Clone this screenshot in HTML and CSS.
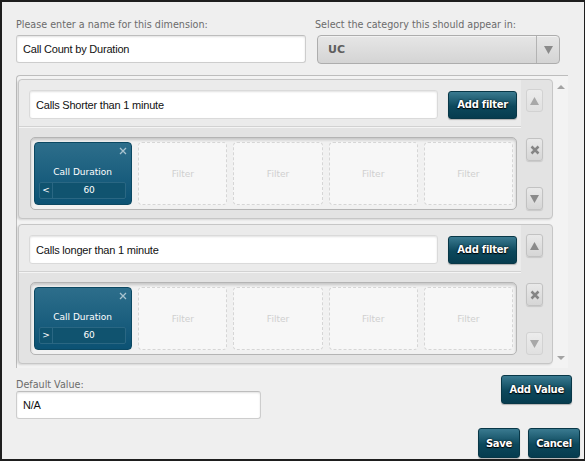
FILE: index.html
```html
<!DOCTYPE html>
<html lang="en">
<head>
  <meta charset="UTF-8" />
  <title>Edit dimension</title>
  <link rel="stylesheet" href="styles.css">
</head>
<body>
  <div class="dialog">
    <div class="top-row">
      <div class="field name-field">
        <label class="label">Please enter a name for this dimension:</label>
        <input class="text-input" type="text" value="Call Count by Duration">
      </div>
      <div class="field cat-field">
        <label class="label">Select the category this should appear in:</label>
        <div class="select">
          <span class="select-value">UC</span>
          <span class="select-arrow">
            <svg width="9" height="8" viewBox="0 0 9 8"><polygon points="0,0 9,0 4.5,8" fill="#8a8a8a"/></svg>
          </span>
        </div>
      </div>
    </div>

    <div class="rules">
      <div class="rule-list">
        <!-- rule 1 -->
        <div class="rule">
          <div class="rule-main">
            <div class="rule-head">
              <input class="text-input rule-name" type="text" value="Calls Shorter than 1 minute">
              <button class="btn">Add filter</button>
            </div>
            <div class="rule-body">
              <div class="filters">
                <div class="card">
                  <span class="card-close">
                    <svg width="8" height="8" viewBox="0 0 8 8"><path d="M1 1L7 7M7 1L1 7" stroke="#a9c3cf" stroke-width="1.3"/></svg>
                  </span>
                  <div class="card-title">Call Duration</div>
                  <div class="card-value"><span class="card-op">&lt;</span><span class="card-num">60</span></div>
                </div>
                <div class="slot">Filter</div>
                <div class="slot">Filter</div>
                <div class="slot">Filter</div>
                <div class="slot">Filter</div>
              </div>
            </div>
          </div>
          <div class="rule-side">
            <div class="icon-btn is-off">
              <svg width="9" height="8" viewBox="0 0 9 8"><polygon points="4.5,0 9,8 0,8" fill="#a8a8a8"/></svg>
            </div>
            <div class="icon-btn">
              <svg width="10" height="10" viewBox="0 0 10 10"><path d="M1.5 1.5L8.5 8.5M8.5 1.5L1.5 8.5" stroke="#858585" stroke-width="2.5"/></svg>
            </div>
            <div class="icon-btn">
              <svg width="9" height="8" viewBox="0 0 9 8"><polygon points="0,0 9,0 4.5,8" fill="#8a8a8a"/></svg>
            </div>
          </div>
        </div>

        <!-- rule 2 -->
        <div class="rule">
          <div class="rule-main">
            <div class="rule-head">
              <input class="text-input rule-name" type="text" value="Calls longer than 1 minute">
              <button class="btn">Add filter</button>
            </div>
            <div class="rule-body">
              <div class="filters">
                <div class="card">
                  <span class="card-close">
                    <svg width="8" height="8" viewBox="0 0 8 8"><path d="M1 1L7 7M7 1L1 7" stroke="#a9c3cf" stroke-width="1.3"/></svg>
                  </span>
                  <div class="card-title">Call Duration</div>
                  <div class="card-value"><span class="card-op">&gt;</span><span class="card-num">60</span></div>
                </div>
                <div class="slot">Filter</div>
                <div class="slot">Filter</div>
                <div class="slot">Filter</div>
                <div class="slot">Filter</div>
              </div>
            </div>
          </div>
          <div class="rule-side">
            <div class="icon-btn">
              <svg width="9" height="8" viewBox="0 0 9 8"><polygon points="4.5,0 9,8 0,8" fill="#8a8a8a"/></svg>
            </div>
            <div class="icon-btn">
              <svg width="10" height="10" viewBox="0 0 10 10"><path d="M1.5 1.5L8.5 8.5M8.5 1.5L1.5 8.5" stroke="#858585" stroke-width="2.5"/></svg>
            </div>
            <div class="icon-btn is-off">
              <svg width="9" height="8" viewBox="0 0 9 8"><polygon points="0,0 9,0 4.5,8" fill="#a8a8a8"/></svg>
            </div>
          </div>
        </div>
      </div>

      <div class="scrollbar">
        <span class="scroll-up"></span>
        <span class="scroll-down"></span>
      </div>
    </div>

    <div class="bottom-row">
      <div class="field default-field">
        <label class="label">Default Value:</label>
        <input class="text-input" type="text" value="N/A">
      </div>
      <button class="btn btn-value">Add Value</button>
    </div>

    <div class="footer">
      <button class="btn btn-save">Save</button>
      <button class="btn btn-cancel">Cancel</button>
    </div>
  </div>
</body>
</html>
```

FILE: styles.css
```css
* {
  box-sizing: border-box;
  margin: 0;
  padding: 0;
}

body {
  width: 585px;
  height: 461px;
  overflow: hidden;
  background-color: #efefef;
  font-family: "DejaVu Sans", Verdana, sans-serif;
}

.dialog {
  width: 585px;
  height: 461px;
  border: solid #1e1e1e;
  border-width: 2px 1px 2px 2px;
  padding: 16px 4px 0 14px;
  display: flex;
  flex-direction: column;
}

/* Fields */

.top-row {
  display: flex;
}

.field {
  display: flex;
  flex-direction: column;
}

.name-field {
  width: 290px;
}

.cat-field {
  width: 245px;
  margin-left: 9px;
}

.label {
  font-size: 9.6px;
  line-height: 13px;
  height: 13px;
  margin-bottom: 4px;
  color: #6b6b6b;
  white-space: nowrap;
}

.text-input {
  height: 28px;
  width: 100%;
  border: 1px solid #cdcdcd;
  border-top-color: #bdbdbd;
  border-radius: 3px;
  background: #fff;
  box-shadow: inset 0 1px 2px rgba(0, 0, 0, 0.12);
  padding: 0 6px;
  font-family: "Liberation Sans", Arial, sans-serif;
  font-size: 11px;
  letter-spacing: -0.2px;
  color: #111;
  outline: none;
}

.select {
  height: 29px;
  margin-left: 2px;
  display: flex;
  align-items: center;
  border: 1px solid #adadad;
  border-radius: 4px;
  background: linear-gradient(#e6e6e6, #d4d4d4);
  box-shadow: inset 0 1px 0 #f2f2f2;
}

.select-value {
  flex: 1;
  padding-left: 10px;
  font-size: 11px;
  font-weight: bold;
  color: #5e5e5e;
}

.select-arrow {
  width: 23px;
  height: 100%;
  border-left: 1px solid #b3b3b3;
  display: flex;
  align-items: center;
  justify-content: center;
}

/* Rules box */

.rules {
  display: flex;
  height: 293px;
  margin-top: 11px;
  margin-right: 12px;
  border: 1px solid #bdbdbd;
  border-right: none;
  border-bottom: none;
  border-radius: 4px 0 0 0;
  background-color: #f3f3f3;
}

.rule-list {
  flex: 1;
  padding: 3px 0 0 1px;
  display: flex;
  flex-direction: column;
  gap: 5px;
}

.rule {
  display: flex;
  border: 1px solid #c6c6c6;
  border-radius: 4px;
  background-color: #e3e3e3;
  box-shadow: -1px 1px 2px rgba(0, 0, 0, 0.12);
}

.rule-main {
  flex: 1;
  display: flex;
  flex-direction: column;
}

.rule-head {
  display: flex;
  align-items: center;
  gap: 10px;
  padding: 10px 4px 7px 10px;
  background-color: #ebebeb;
  border-bottom: 1px solid #d2d2d2;
  border-radius: 4px 0 0 0;
}

.rule-name {
  flex: 1;
  height: 29px;
  border-color: #dadada;
}

.rule-head .btn {
  padding: 0 8px;
}

.rule-body {
  padding: 9px 4px 8px 11px;
  border-top: 1px solid #f4f4f4;
}

.filters {
  display: flex;
  gap: 6px;
  height: 73px;
  padding: 4px 3px;
  border: 1px solid #b4b4b4;
  border-radius: 5px;
  background-color: #f1f1f1;
  box-shadow: inset 0 2px 3px rgba(0, 0, 0, 0.18);
}

.card {
  flex: 1 1 0;
  min-width: 0;
  position: relative;
  display: flex;
  flex-direction: column;
  justify-content: flex-end;
  padding: 0 5px 5px 4px;
  border: 1px solid #0b4862;
  border-radius: 4px;
  background: linear-gradient(#2d6e8b, #0b5173);
  color: #fff;
  font-size: 9px;
}

.card-close {
  position: absolute;
  top: 4px;
  right: 4px;
  display: flex;
}

.card-title {
  text-align: center;
  line-height: 12px;
  margin-bottom: 4px;
}

.card-value {
  display: flex;
  height: 17px;
  line-height: 15px;
  border: 1px solid #2a6783;
  border-radius: 2px;
  background-color: #10536f;
}

.card-op {
  width: 13px;
  text-align: center;
  border-right: 1px solid #2a6783;
}

.card-num {
  flex: 1;
  text-align: center;
}

.slot {
  flex: 1 1 0;
  min-width: 0;
  display: flex;
  align-items: center;
  justify-content: center;
  border: 1px dashed #d6d6d6;
  border-radius: 4px;
  background-color: #f7f7f7;
  color: #cfcfcf;
  font-size: 9px;
}

.rule-side {
  width: 31px;
  padding: 9px 0 8px 5px;
  display: flex;
  flex-direction: column;
  justify-content: space-between;
}

.icon-btn {
  width: 17px;
  height: 23px;
  display: flex;
  align-items: center;
  justify-content: center;
  border: 1px solid #c2c2c2;
  border-radius: 3px;
  background: linear-gradient(#e9e9e9, #d6d6d6);
  box-shadow: 0 1px 1px rgba(0, 0, 0, 0.12);
}

.icon-btn.is-off {
  border-color: #d2d2d2;
  background: linear-gradient(#ececec, #e0e0e0);
  box-shadow: none;
}

.scrollbar {
  width: 15px;
  display: flex;
  flex-direction: column;
  justify-content: space-between;
  align-items: center;
  padding: 9px 0 8px;
}

.scroll-up,
.scroll-down {
  width: 0;
  height: 0;
  border-left: 4px solid transparent;
  border-right: 4px solid transparent;
}

.scroll-up {
  border-bottom: 4px solid #a3a3a3;
}

.scroll-down {
  border-top: 4px solid #a3a3a3;
}

/* Buttons */

.btn {
  height: 28px;
  padding: 0 8px;
  border: 1px solid #083747;
  border-radius: 3px;
  background: linear-gradient(#3a7a90, #0c485c 55%, #063c4f);
  box-shadow: 0 1px 1px rgba(0, 0, 0, 0.25);
  color: #fff;
  font-family: "DejaVu Sans", Verdana, sans-serif;
  font-size: 10px;
  font-weight: bold;
  letter-spacing: -0.25px;
  text-shadow: 0 0 2px #000, 0 1px 1px #000;
  white-space: nowrap;
  cursor: pointer;
}

/* Bottom */

.bottom-row {
  display: flex;
  justify-content: space-between;
  align-items: flex-start;
  margin-top: 7px;
  padding-right: 8px;
}

.default-field {
  width: 245px;
  padding-top: 3px;
}

.default-field .label {
  margin-bottom: 0;
}

.btn-value {
  height: 29px;
  padding: 0 7px;
}

.footer {
  display: flex;
  justify-content: flex-end;
  gap: 8px;
  margin-top: 9px;
}

.btn-save,
.btn-cancel {
  height: 30px;
  padding: 0 7px;
}
```
